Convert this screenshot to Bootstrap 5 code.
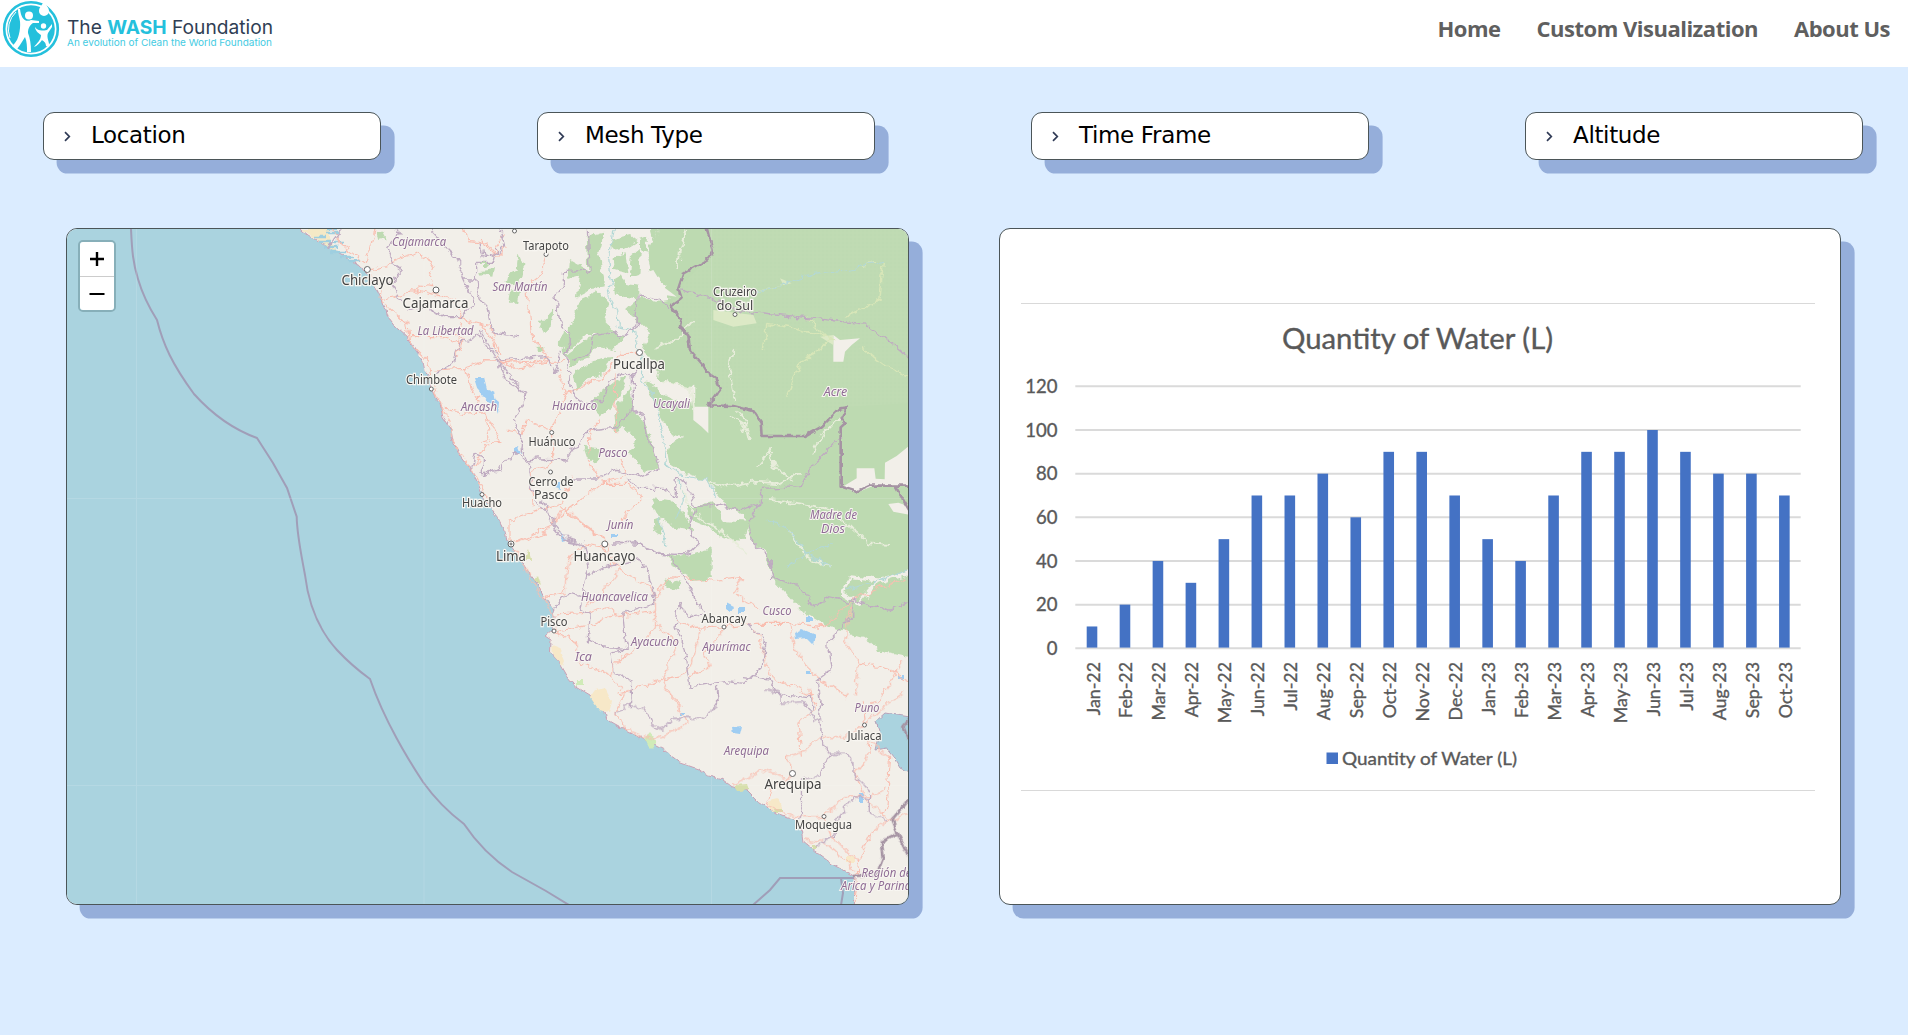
<!DOCTYPE html>
<html lang="en">
<head>
<meta charset="utf-8">
<meta name="viewport" content="width=device-width, initial-scale=1">
<title>The WASH Foundation</title>
<link href="https://cdn.jsdelivr.net/npm/bootstrap@5.3.0/dist/css/bootstrap.min.css" rel="stylesheet">
<style>
body{background:#dbecff;height:100vh;overflow:hidden}
.topbar{height:67px;padding:0 18px 0 0}
.topbar .navbar-nav .nav-link{font:700 22px/30px "Open Sans","Noto Sans",sans-serif;letter-spacing:-.5px;color:#5f5f5f;padding:0}
.topbar .navbar-nav{gap:36px;margin-top:-11px}
.filters{padding:45px 0 0 43px;gap:156px}
.filter-box{width:338px;height:48px;padding:0 0 2px 20px;border:1px solid #4b5558;border-radius:11px;box-shadow:13.6px 13.6px 0 #95aeda;background:#fff;font-family:"DejaVu Sans",sans-serif;font-size:23px;letter-spacing:-.35px;color:#000}
.filter-box svg{margin:2px 20px 0 0}
.panels{padding:68px 0 0 66px;gap:90px}
.panel{width:843px;height:677px;border:1px solid #4b5558;border-radius:11px;box-shadow:13.6px 13.6px 0 #95aeda;background:#fff;overflow:hidden}
.panel.chart-panel{width:842px}
.zoomer{left:11px;top:11px;border:2px solid #87afb9;border-radius:5px;overflow:hidden}
.zoomer button{width:34px;height:34px;border:0;background:#fff;display:block;padding:0}
.zoomer button+button{border-top:1px solid #ccc}
.zoomer svg{display:block;margin:auto}
.city{font-family:"Noto Sans",sans-serif;fill:#444;stroke:#f8f6f1;stroke-width:2.4px;paint-order:stroke;text-anchor:middle}
.region{font-family:"Noto Sans",sans-serif;font-style:italic;fill:#8f6c95;stroke:#f8f6f1;stroke-width:2px;paint-order:stroke;text-anchor:middle;font-size:12.5px}
.ln path{vector-effect:non-scaling-stroke;fill:none;stroke-linejoin:round}
.road path{stroke:#f9beb0;stroke-width:1.1px}
.bound path{stroke:#bfabc1;stroke-width:1.3px}
.nation path{stroke:#a593a3;stroke-width:2.6px}
.stream path{stroke:#b3d8d6;stroke-width:1.2px}
.dots circle{fill:#fff;stroke:#666;stroke-width:1}
.plot text{font-family:Lato,sans-serif;fill:#595959}
</style>
</head>
<body>
<nav class="topbar navbar navbar-expand bg-white align-items-center">
  <a class="navbar-brand p-0 m-0 align-self-start" href="#" aria-label="The WASH Foundation">
    <svg class="d-block" width="290" height="60" viewBox="0 0 290 60">
      <circle cx="31" cy="29" r="26.8" fill="#fff" stroke="#24c0dc" stroke-width="2.6"/>
      <circle cx="31" cy="29" r="23.8" fill="#24c0dc"/>
      <path d="M44 1C42 6 39 7 39 11a5 5 0 0 0 10 0C49 7 46 6 44 1Z" fill="#fff"/>
      <circle cx="29" cy="15.5" r="4" fill="#fff"/><circle cx="43.5" cy="26" r="2.7" fill="#fff"/>
      <path d="M18 9C18 17 21 19 20 28 19 38 16 43 12 46L17 49C21 44 23 40 25 37 27 42 27 46 27 52L31 52C31 44 30 38 28 33 28 28 30 25 33 23L39 23 39 21 31 20C25 23 21 18 20 9Z" fill="#fff"/>
      <path d="M35 27C38 31 41 31 47 30L52 24 52 27 48 33C46 38 50 42 49 47L46 46C46 42 43 41 42 40 40 43 37 46 34 47 37 43 41 40 41 35 38 33 35 30 35 27Z" fill="#fff"/>
      <path d="M10 38A24 24 0 0 1 16 12" fill="none" stroke="#fff" stroke-width="1"/>
      <g font-family="Inter, sans-serif">
        <text x="67" y="33.5" font-size="19" fill="#2f3e54" textLength="206" lengthAdjust="spacingAndGlyphs">The <tspan font-weight="700" fill="#24c0dc">WASH</tspan> Foundation</text>
        <text x="67" y="45.5" font-size="9.5" fill="#45cbe2" textLength="205" lengthAdjust="spacingAndGlyphs">An evolution of Clean the World Foundation</text>
      </g>
    </svg>
  </a>
  <div class="navbar-nav ms-auto">
    <a class="nav-link" href="#">Home</a><a class="nav-link" href="#">Custom Visualization</a><a class="nav-link" href="#">About Us</a>
  </div>
</nav>
<main>
  <div class="filters d-flex">
    <div class="filter-box d-flex align-items-center"><svg width="7" height="11" viewBox="0 0 7 11" fill="none" stroke="#2f3a55" stroke-width="1.7"><path d="M1 1.2 5.3 5.5 1 9.8"/></svg>Location</div>
    <div class="filter-box d-flex align-items-center"><svg width="7" height="11" viewBox="0 0 7 11" fill="none" stroke="#2f3a55" stroke-width="1.7"><path d="M1 1.2 5.3 5.5 1 9.8"/></svg>Mesh Type</div>
    <div class="filter-box d-flex align-items-center"><svg width="7" height="11" viewBox="0 0 7 11" fill="none" stroke="#2f3a55" stroke-width="1.7"><path d="M1 1.2 5.3 5.5 1 9.8"/></svg>Time Frame</div>
    <div class="filter-box d-flex align-items-center"><svg width="7" height="11" viewBox="0 0 7 11" fill="none" stroke="#2f3a55" stroke-width="1.7"><path d="M1 1.2 5.3 5.5 1 9.8"/></svg>Altitude</div>
  </div>
  <div class="panels d-flex">
    <section class="panel position-relative">
      <svg class="d-block" width="841" height="675" viewBox="67 229 841 675">
        <defs>
          <filter id="rough" filterUnits="userSpaceOnUse" x="60" y="220" width="860" height="700" color-interpolation-filters="sRGB"><feTurbulence type="fractalNoise" baseFrequency=".12" numOctaves="3" seed="4"/><feDisplacementMap in="SourceGraphic" scale="9" xChannelSelector="R" yChannelSelector="G"/></filter>
          <filter id="fine" filterUnits="userSpaceOnUse" x="60" y="220" width="860" height="700" color-interpolation-filters="sRGB"><feTurbulence type="fractalNoise" baseFrequency=".15" numOctaves="2" seed="9"/><feDisplacementMap in="SourceGraphic" scale="5" xChannelSelector="R" yChannelSelector="G"/></filter>
          <pattern id="mesh" width="4" height="4" patternUnits="userSpaceOnUse"><path d="M0 .5H4M.5 0V4" stroke="#cfe2c2" stroke-width=".6" opacity=".55"/></pattern>
        </defs>
        <rect x="60" y="220" width="860" height="700" fill="#aad3df"/>
        <!-- mainland -->
        <g filter="url(#fine)">
          <path id="coast" fill="#f2efe9" stroke="#c9a0b4" stroke-width="1" d="M298 220 300.7 229 308 235 326.7 246.7 343 255 360 266.7 368 275 375 286.7 381.7 298 388 316.7 396.7 328 406.7 336.7 415 350 423 361.7 425 371.7 430 378 430.7 388 435 396.7 440 403 443 416.7 450.7 428 453 441.7 460 455 470 468 478 483 482.7 496.7 490 508 498 518 505 531.7 506.7 540 511.7 548 521.7 561.7 528 571.7 536.7 583 543.6 596.7 552 608 554 616.7 552 630 545 636 551 640 550.5 653 559 661.7 567.7 676.7 576 686.7 590 695 594 701.7 605 711.7 607 720 623 729 644 740 664 750 680 762.7 698 769 708.6 776 723 780 732 786.7 748 791 758.6 801.7 776 813 796 820 801.4 830 803 841.7 815.7 852 833.6 865 855 876.7 854 920 930 920 930 220Z"/>
          <path d="M302 229H330V238L337 254 320 242Z" fill="#f5e9c6"/>
          <path d="M314 237h12M318 242h14M326 233h12M324 247h14M334 242h10M330 252h16M340 257h14M348 261h12M327 229h9" stroke="#9fcfe0" stroke-width="2.4"/>
          <path d="M552 645 560 648 565 661 563 666 553 655ZM595 690 605 688 612 702 609 712 599 710 590 697ZM768 800 778 798 782 810 772 812ZM846 855h9v8h-9Z" fill="#f7e8c8"/>
          <path d="M644 740 650 733 657 742 652 748ZM576 680h7v5h-7Z" fill="#d0ebb8"/>
          <path d="M734 785 748 784 750 790 738 791ZM773 808h9v4h-8ZM812 845h6v5h-6ZM524 560 529 549 532 560ZM534 580 538 575 541 585Z" fill="#d7dfac"/>
          <path d="M876 721 885 713 903 716 915 718V775L900 768 894 758 886 748 876 750 880 733Z" fill="#aad3df" stroke="#b9a3ba"/>
        </g>
        <!-- forest -->
        <g filter="url(#rough)"><g transform="translate(480 220) scale(.33333)" fill="#bddab1">
          <path d="M540 20 515 70 500 100 515 160 560 200 565 240 530 245 480 230 435 270 470 300 510 340 490 390 500 410 540 430 530 480 560 480 600 500 640 500 640 540 610 560 550 520 520 500 500 520 530 560 570 640 620 650 570 670 560 700 575 740 620 760 680 780 720 830 740 860 790 880 800 920 820 970 857 995 873 1070 918 1119 971 1179 1043 1220 1146 1250 1197 1290 1330 1320V0Z"/>
          <path d="M320 50 370 38 362 110 383 150 370 200 330 205 290 235 300 170 265 180 270 120 325 150ZM390 60 450 45 470 60 430 85 395 90ZM480 60 505 50 500 95 480 90ZM400 110 440 100 445 160 405 150ZM455 110 480 90 475 165 450 165ZM390 185 425 165 440 195 480 200 470 235 430 230 400 215ZM300 240 355 215 385 250 370 300 400 330 370 345 320 345 290 370 255 400 265 350ZM260 400 330 350 400 335 430 350 400 390 350 380 320 420 275 440ZM280 460 340 420 395 410 370 460 320 480 290 510ZM360 520 410 480 440 470 420 520 400 560 360 590 330 560ZM400 580 450 500 460 560 440 620 405 640ZM430 620 460 565 500 620 520 690 540 745 490 750 450 700 470 660ZM310 680 370 690 350 735 320 710ZM505 0 550 0 520 60ZM250 330 275 350 260 400 235 370ZM490 480 530 495 500 520 480 500Z"/>
          <path d="M85 165 110 150 115 100 135 150 105 200 75 205ZM0 150 45 145 40 170 5 165ZM90 215 120 210 115 245 85 245ZM180 310 205 285 220 270 215 320 195 335ZM170 380h20v14h-20ZM0 130h20v8H0ZM-310 35h20l10 20-25 5Z"/>
          <path d="M510 835 570 840 610 880 640 930 580 920 530 880ZM520 900 545 890 540 945 525 935ZM620 860 700 850 735 900 800 905 795 960 730 955 680 920 630 900ZM560 1000 600 1010 695 985 695 1070 640 1080 580 1040ZM550 1075 605 1090 600 1115 555 1100Z"/>
        </g></g>
        <g transform="translate(480 220) scale(.33333)">
          <path d="M690 27H1286V550L1100 560 985 648H845L825 570 685 555 720 510 660 420 600 310 570 260 600 200 690 110Z" fill="url(#mesh)"/>
          <g fill="#f2efe9">
            <path d="M640 560H685V640L665 620 640 600ZM1060 345 1080 360 1140 355 1115 375 1095 395 1090 425H1060ZM1290 675 1250 708 1215 728 1214 778 1187 776 1183 745H1130V775L1088 800 1130 818 1180 797H1290ZM1225 852 1255 848 1290 860V885L1240 875ZM440 178 520 150 550 200 590 230 520 220 490 190Z"/>
          </g>
          <path d="M700 270 820 285 830 310 760 320 700 300ZM900 175 935 190 910 195ZM1020 350 1060 345 1060 375Z" fill="#dce9c6"/>
        </g>
        <g class="ln" filter="url(#rough)">
          <g transform="translate(480 220) scale(.33333)">
            <path d="M390 20 370 100 390 200 400 270 425 330 470 370 490 430 480 490 520 560 545 650 560 740 600 765" stroke="#f2efe9" stroke-width="8"/>
            <path d="M620 30 600 90 595 150M640 300 600 350 520 390M760 390 745 440 765 540M545 480 630 505 640 570M750 590 800 620 810 660M770 570 800 600 790 640M690 790 740 800 820 785 900 790 960 760M830 740 870 690 880 740 940 780M1080 590 1030 640 1000 700M870 840 960 850 1060 870 1120 930 1170 970 1230 975M600 800 640 880 700 920 760 960 800 1000M930 930 980 1010 1050 1040" stroke="#e8eddb" stroke-width="1.8"/>
            <path d="M860 310 960 330 1060 355 960 430 920 530M1050 360 980 290M860 310 850 390M910 190 820 220M1190 120 1150 140M1210 120 1200 240 1100 290M1140 380 1220 440 1286 470" stroke="#d8e6b8" stroke-width="1.5"/>
          </g>
          <g transform="translate(380 480) scale(.34436 .33333)"><path d="M1535 280 1450 300 1370 290 1340 340 1390 370 1440 310 1535 275" stroke="#f2efe9" stroke-width="3"/></g>
          <g class="stream">
            <g transform="translate(480 220) scale(.33333)"><path d="M400 30 385 110 395 190 380 220 410 270 415 320 460 330 470 370 490 430 485 490 520 520 545 620 560 740 600 765 680 780 710 830M600 780 610 840 590 900M820 220 1000 160 1100 150 1210 120M860 900 930 930 980 1000 1050 1040"/></g>
            <g transform="translate(380 480) scale(.34436 .33333)"><path d="M1180 260 1250 215 1320 190M1350 330 1430 310 1530 270M830 200 810 110"/></g>
          </g>
        </g>
        <!-- lakes -->
        <g filter="url(#fine)" fill="#9fcdf2"><path d="M474 377h10l3 12 7 3 3 15-9-5-10-12ZM494 398l5 4-1 12-3-8ZM726 603l8 4-3 5-5-3ZM738 608h7v5h-7ZM794 633l8-4 14 6-2 10-7-7-12 1ZM732 727l10-1-2 8-7-1ZM514 448l4-2 3 8-7-1ZM560 532l6 8-4 1ZM611 535h5v3h-5ZM553 482h8v8l-7-2ZM806 618h7v4h-7ZM898 676h7v3h-7ZM680 714h5v3h-5ZM806 670h5v4h-5ZM859 793h4v10h-4Z"/></g>
        <g class="ln road" filter="url(#rough)">
          <g transform="translate(60 220) scale(.33333)"><path d="M820 27 850 80 920 130 945 27M920 150 980 140 1000 120 1070 100 1120 130 1105 170 1120 200 1080 195 1080 210M920 150 965 200 960 240 1040 310 1050 370 1100 420 1110 480 1145 560 1170 600 1180 670 1235 750 1290 850M965 240 1080 210 1180 240 1210 300 1290 320 1320 400M1205 310 1190 410 1210 360 1160 330M1215 445 1270 425 1400 430 1530 420M1120 450 1215 445 1240 520 1280 580 1320 670 1280 675 1240 740M1145 565 1210 580 1280 575M1210 27 1230 65 1280 70 1305 100 1330 40M1050 350 1150 350 1210 370"/></g>
          <g transform="translate(480 220) scale(.33333)"><path d="M0 60 50 110 80 80M200 110 190 160 140 200 150 290 155 360 205 400 200 430 100 445 50 420 45 370 0 310M60 420 160 430 210 410M235 450 260 520 370 470 420 400 480 400M260 520 230 590 215 630 140 600 130 640 80 630M405 460 410 640M215 640 215 730 150 760 160 860M360 600 330 640 325 720 360 780M20 570 30 660 0 670M95 970 210 920 265 870 360 790 440 770 420 720M240 860 290 900 370 960M280 770 240 850 90 900 90 965M360 790 440 790 490 830 440 880 420 920M370 980 400 1040"/></g>
          <g transform="translate(380 480) scale(.34436 .33333)"><path d="M380 190 480 160 540 80M390 210 430 280 470 350 510 420 505 455 570 490 580 550 660 580 700 630M475 350 535 340 545 240 600 190 655 200M540 90 650 180 695 270 650 330 600 380M695 270 780 320 800 350 840 290 960 300 1050 290 1030 340 1100 390M510 405 600 400 660 380 690 410 800 390 800 350M510 455 630 430 690 400M800 390 800 440 730 520 680 550 670 590M800 430 865 490 820 600 870 690M860 420 920 445 1000 440 1090 430 1190 430 1290 440 1370 360 1530 290M930 450 900 560 870 590 820 600 730 630 690 640M1000 445 940 520 955 560 900 590M1090 450 1120 540 1130 590 1200 620 1260 650M1190 430 1200 500 1240 560 1280 600 1360 650M1370 370 1350 480 1390 550 1480 570 1535 600M1390 550 1380 650M1130 430 1200 430M1520 540 1480 610 1430 680"/></g>
          <g transform="translate(380 690) scale(.35714 .33333)"><path d="M690 0 660 70 690 120 770 150 860 100 830 30 800 0M985 285 1070 240 1140 265 1155 240 1140 200 1190 180 1230 140 1300 140 1350 110M1155 260 1100 290 1085 345 1160 380 1240 380 1300 320 1370 320 1410 300M1240 380 1270 450 1340 510 1380 420 1430 385M1340 510 1330 640M1365 150 1430 200 1420 340 1410 380M1365 150 1370 190 1330 250 1360 330 1430 390M1180 200 1170 100 1220 50 1200 0M1350 110 1400 60 1470 10M1190 450 1250 460 1300 510 1330 550M1360 100 1350 30M1480 370 1430 390"/></g>
        </g>
        <g class="ln bound" filter="url(#rough)">
          <g transform="translate(60 220) scale(.33333)"><path d="M845 27 800 85M1000 27 1020 40 980 80 1000 130 1030 150 990 190 1020 240 1050 270 1100 260 1150 290 1200 290 1245 255 1210 180 1190 110 1140 60 1110 27M1210 180 1250 180 1260 240 1280 260 1300 340 1380 350M1250 180 1250 130 1300 130 1310 90M1120 460 1180 430 1200 370 1260 345 1310 420 1370 490 1400 540M1235 750 1245 700 1270 710 1270 770 1320 740"/></g>
          <g transform="translate(480 220) scale(.33333)"><path d="M0 70 10 110 50 100 75 80 60 30M325 27 330 150 250 155 250 200 225 230 240 310 275 345 260 400 265 450 270 500 300 550 370 540 390 480 430 460 460 465M245 390 225 460 200 410 60 420 0 330M50 420 80 480 140 520 120 570 100 600 125 640 120 680 140 720 200 715 260 720 300 660 330 630 420 620 460 560 460 470 480 430M460 565 490 590 500 650 525 700 540 745 480 770 400 750 350 780 280 780M440 780 480 805 550 805 585 830 590 770 620 790 645 860 715 855 780 870 835 855 845 805 965 800 1000 730 1080 650M645 865 625 920 655 970 620 1005 540 1000 480 970 390 965M475 225 465 290 480 310 430 350 400 335 340 350 330 400 280 420M475 225 530 235 570 265M835 855 805 910 820 970 870 1015 875 1080M0 760 60 750 105 695 145 730 150 790 180 860 225 900 225 930 250 960 300 970M600 205 700 240 770 270 1165 313 1286 415"/></g>
          <g transform="translate(380 480) scale(.34436 .33333)"><path d="M470 60 500 130 545 180 590 190 600 240 605 280 580 390 610 405 605 480 650 500 715 510 705 400 800 370 780 280 750 240 650 260 605 285M510 385 545 340 600 350M670 190 750 185 800 220 840 225 880 290 940 400 900 410 865 370 860 440 880 490 900 620 1000 605 1060 610 1110 560 1120 490 1070 430M715 510 670 520 680 580 730 600 730 690M1060 590 1130 600 1150 640 1250 650 1255 690M1130 230 1140 290 1220 320 1260 380 1300 350 1370 365 1370 410 1300 490 1310 570 1270 600 1280 690M1370 360 1480 390 1535 365M980 620 985 660 965 690"/></g>
          <g transform="translate(380 690) scale(.35714 .33333)"><path d="M700 0 705 40 660 70M700 45 745 60 760 100 790 120 820 85 900 85 945 50 945 0M1080 0 1120 10 1120 40 1190 35 1215 95 1235 80 1230 0M1230 80 1240 160 1260 190 1230 260 1180 270 1180 330 1190 370 1170 390M1260 190 1310 190 1330 220 1330 260 1370 300 1370 330 1330 320 1300 360 1280 390 1270 440 1220 470M1370 330 1370 370 1420 390"/></g>
        </g>
        <g class="ln nation" filter="url(#fine)">
          <g transform="translate(480 220) scale(.33333)"><path d="M680 20 698 95 680 120 610 160 595 205 605 235 570 260 605 300 600 320 625 350 630 390 665 430 680 455 710 475 720 510 685 556 760 558 820 573 842 605 845 648H975L1025 620 1080 565 1100 562 1085 595 1095 610 1082 622V800L1130 815 1170 797H1290M1245 797 1290 875"/></g>
          <g transform="translate(380 690) scale(.35714 .33333)"><path d="M1480 330 1435 390 1450 430 1405 455 1410 500 1390 555 1325 558M1450 430 1480 500M1480 90 1465 110 1480 150"/></g>
        </g>
        <g fill="none" stroke="#a09eb8" stroke-width="2">
          <path d="M131 229C132 251 133 263 138 279 143 296 150 309 157 320 163 344 172 364 194 394 212 414 235 430 257 438L273 463 287 488 296.7 516.7C297 535 301 553 305 575 308 600 317 628 337 650Q352 666 370 679C380 708 396 741 423 782 438 803 452 815 464 824 476 842 491 858 512 872L546 891 569 905"/>
          <path d="M753 905 770 890 780 878H854M841 878 843 893 841 905"/>
        </g>
        <path d="M136.500 229V905M424 229V905M711.500 229V905M66 498.500H909M66 785.500H909" stroke="#fff" opacity=".13"/>
        <g class="dots"><circle cx="367.300" cy="269.500" r="3"/><circle cx="436" cy="290" r="3"/><circle cx="514.500" cy="231" r="2"/><circle cx="546" cy="254.500" r="2"/><circle cx="639.500" cy="352.500" r="3"/><circle cx="735" cy="314.500" r="2"/><circle cx="551.700" cy="432.500" r="2"/><circle cx="550.500" cy="472" r="2"/><circle cx="604.800" cy="544" r="3"/><circle cx="511" cy="544" r="3"/><circle cx="511" cy="544" r="1"/><circle cx="431.300" cy="389" r="2"/><circle cx="482" cy="494.500" r="2"/><circle cx="554" cy="631" r="2"/><circle cx="724" cy="627" r="2"/><circle cx="864.500" cy="725" r="2"/><circle cx="792.500" cy="773.500" r="3"/><circle cx="824" cy="816.500" r="2"/></g>
        <g class="region" transform="translate(0 -.5)"><text x="419" y="246" textLength="54" lengthAdjust="spacingAndGlyphs">Cajamarca</text><text x="520" y="291.500" textLength="55" lengthAdjust="spacingAndGlyphs">San Martín</text><text x="445.500" y="335.500" textLength="56" lengthAdjust="spacingAndGlyphs">La Libertad</text><text x="479" y="411" textLength="36" lengthAdjust="spacingAndGlyphs">Ancash</text><text x="574.500" y="410.500" textLength="45" lengthAdjust="spacingAndGlyphs">Huánuco</text><text x="671.500" y="408" textLength="37" lengthAdjust="spacingAndGlyphs">Ucayali</text><text x="835.500" y="396">Acre</text><text x="613" y="457" textLength="29" lengthAdjust="spacingAndGlyphs">Pasco</text><text x="620.500" y="529" textLength="26" lengthAdjust="spacingAndGlyphs">Junín</text><text x="833.500" y="519.500" textLength="47" lengthAdjust="spacingAndGlyphs">Madre de</text><text x="833" y="533">Dios</text><text x="614.500" y="601" textLength="67" lengthAdjust="spacingAndGlyphs">Huancavelica</text><text x="777" y="615.500" textLength="29" lengthAdjust="spacingAndGlyphs">Cusco</text><text x="655" y="646" textLength="48" lengthAdjust="spacingAndGlyphs">Ayacucho</text><text x="726.500" y="651" textLength="48" lengthAdjust="spacingAndGlyphs">Apurímac</text><text x="583.500" y="661.500">Ica</text><text x="867" y="712" textLength="25" lengthAdjust="spacingAndGlyphs">Puno</text><text x="746.500" y="755" textLength="45" lengthAdjust="spacingAndGlyphs">Arequipa</text><text style="text-anchor:start" x="861.500" y="877" textLength="50" lengthAdjust="spacingAndGlyphs">Región de</text><text style="text-anchor:start" x="841" y="890.500" textLength="92" lengthAdjust="spacingAndGlyphs">Arica y Parinacota</text></g>
        <g class="city" font-size="14.500" transform="translate(0 -.5)"><text x="367.500" y="285.500" textLength="52" lengthAdjust="spacingAndGlyphs">Chiclayo</text><text x="435.500" y="308" textLength="66" lengthAdjust="spacingAndGlyphs">Cajamarca</text><text x="639" y="369" textLength="52" lengthAdjust="spacingAndGlyphs">Pucallpa</text><text x="511" y="561" textLength="30" lengthAdjust="spacingAndGlyphs">Lima</text><text x="604.500" y="561" textLength="62" lengthAdjust="spacingAndGlyphs">Huancayo</text><text x="793" y="789.500" textLength="57" lengthAdjust="spacingAndGlyphs">Arequipa</text></g>
        <g class="city" font-size="12.500" transform="translate(0 -.5)"><text x="546" y="250.500" textLength="46" lengthAdjust="spacingAndGlyphs">Tarapoto</text><text x="735" y="296.500" textLength="44" lengthAdjust="spacingAndGlyphs">Cruzeiro</text><text x="735" y="310">do Sul</text><text x="431.500" y="384.500" textLength="51" lengthAdjust="spacingAndGlyphs">Chimbote</text><text x="552" y="446.500" textLength="47" lengthAdjust="spacingAndGlyphs">Huánuco</text><text x="551" y="486" textLength="45" lengthAdjust="spacingAndGlyphs">Cerro de</text><text x="551" y="499.500">Pasco</text><text x="482" y="507" textLength="40" lengthAdjust="spacingAndGlyphs">Huacho</text><text x="554" y="626.500" textLength="27" lengthAdjust="spacingAndGlyphs">Pisco</text><text x="724" y="623" textLength="45" lengthAdjust="spacingAndGlyphs">Abancay</text><text x="864.500" y="740" textLength="34" lengthAdjust="spacingAndGlyphs">Juliaca</text><text x="823.500" y="829.500" textLength="57" lengthAdjust="spacingAndGlyphs">Moquegua</text></g>
      </svg>
      <div class="zoomer position-absolute">
        <button type="button" aria-label="Zoom in"><svg width="14" height="14"><path d="M0 7H14M7 0V14" stroke="#000" stroke-width="2.4"/></svg></button>
        <button type="button" aria-label="Zoom out"><svg width="16" height="14"><path d="M.5 7H15.500" stroke="#000" stroke-width="2.200"/></svg></button>
      </div>
    </section>
    <section class="panel chart-panel">
      <svg class="plot d-block" width="840" height="675" viewBox="1000 229 840 675">
        <path d="M1021 303.500H1815M1021 790.500H1815" stroke="#d9d9d9"/>
        <text x="1282" y="349" font-size="28.500" stroke="#595959" stroke-width=".35" textLength="271" lengthAdjust="spacingAndGlyphs">Quantity of Water (L)</text>
        <g id="grid" stroke="#dadada" stroke-width="2"></g>
        <g id="ticks" font-size="18.500" text-anchor="end" stroke="#595959" stroke-width=".35"></g>
        <g id="bars" fill="#4472c4"></g>
        <g id="months" font-size="17.800" text-anchor="end" stroke="#595959" stroke-width=".35"></g>
        <rect x="1326.500" y="752.500" width="11.500" height="11.500" fill="#4472c4"/>
        <text x="1342" y="765" font-size="18" stroke="#595959" stroke-width=".35" textLength="175" lengthAdjust="spacingAndGlyphs">Quantity of Water (L)</text>
      </svg>
    </section>
  </div>
</main>
<script src="https://cdn.jsdelivr.net/npm/bootstrap@5.3.0/dist/js/bootstrap.bundle.min.js"></script>
<script>
const litres = [10,20,40,30,50,70,70,80,60,90,90,70,50,40,70,90,90,100,90,80,80,70];
const names = ['Jan','Feb','Mar','Apr','May','Jun','Jul','Aug','Sep','Oct','Nov','Dec'];
const y = v => 648.3 - v * 2.183;
let grid = '', ticks = '', bars = '', months = '';
for (let v = 0; v <= 120; v += 20) {
  grid += `<path d="M1075.300 ${y(v)}H1800.700"/>`;
  ticks += `<text x="1057.500" y="${y(v) + 6.7}">${v}</text>`;
}
litres.forEach((v, i) => {
  const c = 1092 + i * 32.97;
  bars += `<rect x="${c - 5.3}" y="${y(v)}" width="10.600" height="${v * 2.183 - .7}"/>`;
  months += `<text transform="translate(${c + 7.5} 662) rotate(-90)">${names[i % 12]}-${22 + Math.floor(i / 12)}</text>`;
});
document.getElementById('grid').innerHTML = grid;
document.getElementById('ticks').innerHTML = ticks;
document.getElementById('bars').innerHTML = bars;
document.getElementById('months').innerHTML = months;
</script>
</body>
</html>
